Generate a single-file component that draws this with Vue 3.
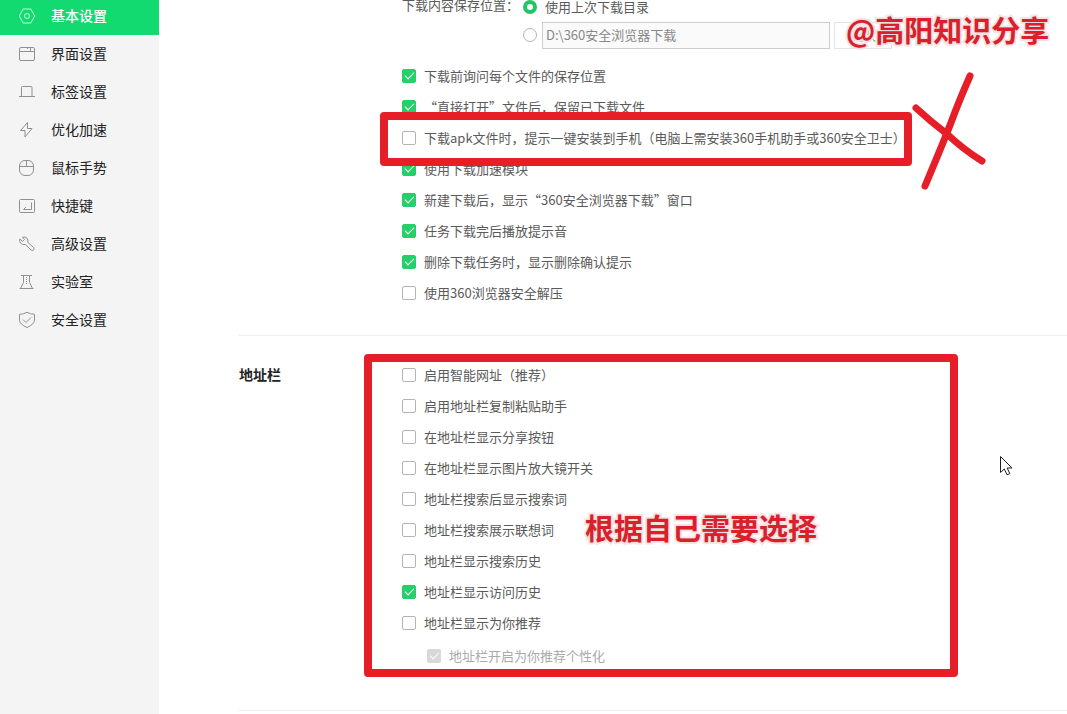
<script setup>
import { ref } from 'vue'

const nav = [
  { id: 'basic', label: '基本设置' },
  { id: 'ui', label: '界面设置' },
  { id: 'tab', label: '标签设置' },
  { id: 'speed', label: '优化加速' },
  { id: 'mouse', label: '鼠标手势' },
  { id: 'keys', label: '快捷键' },
  { id: 'advanced', label: '高级设置' },
  { id: 'lab', label: '实验室' },
  { id: 'safe', label: '安全设置' },
]

const downloads = ref([
  { label: '下载前询问每个文件的保存位置', on: true },
  { label: '“直接打开”文件后，保留已下载文件', on: true },
  { label: '下载apk文件时，提示一键安装到手机（电脑上需安装360手机助手或360安全卫士）', on: false },
  { label: '使用下载加速模块', on: true },
  { label: '新建下载后，显示“360安全浏览器下载”窗口', on: true },
  { label: '任务下载完后播放提示音', on: true },
  { label: '删除下载任务时，显示删除确认提示', on: true },
  { label: '使用360浏览器安全解压', on: false },
])

const address = ref([
  { label: '启用智能网址（推荐）', on: false },
  { label: '启用地址栏复制粘贴助手', on: false },
  { label: '在地址栏显示分享按钮', on: false },
  { label: '在地址栏显示图片放大镜开关', on: false },
  { label: '地址栏搜索后显示搜索词', on: false },
  { label: '地址栏搜索展示联想词', on: false },
  { label: '地址栏显示搜索历史', on: false },
  { label: '地址栏显示访问历史', on: true },
  { label: '地址栏显示为你推荐', on: false },
  { label: '地址栏开启为你推荐个性化', on: true, sub: true },
])

const location = ref('last')
const path = ref('D:\\360安全浏览器下载')
</script>

<template>
  <div class="page" lang="zh-CN">
    <aside class="sidebar">
      <nav class="nav">
        <a v-for="item in nav" :key="item.id" :href="'#' + item.id" class="nav-item" :class="{ active: item.id === 'basic' }">
          <svg class="nav-icon" viewBox="0 0 18 18" aria-hidden="true">
            <template v-if="item.id === 'basic'">
              <path d="M5.200 2h7.600l3.900 7-3.900 7H5.200L1.300 9z" />
              <circle cx="9" cy="9" r="2.500" />
            </template>
            <template v-else-if="item.id === 'ui'">
              <rect x="1.500" y="2.500" width="15" height="13" rx="1.500" />
              <path d="M1.500 6.500h15M9.500 2.500v1.500M12.500 2.500v4" />
            </template>
            <path v-else-if="item.id === 'tab'" d="M1 13.500h16M3.500 13.500v-9q0-1 1-1h8.500q1 0 1 1v9" />
            <path v-else-if="item.id === 'speed'" d="M9.500 1.500L2.500 9.500h4.500v6.500l7-8.500H9.500z" />
            <template v-else-if="item.id === 'mouse'">
              <rect x="1.500" y="1.500" width="14" height="15" rx="5.500" />
              <path d="M1.500 7.500h14M8.500 1.500v6" />
            </template>
            <template v-else-if="item.id === 'keys'">
              <rect x="1.500" y="2.500" width="15" height="13" rx="1" />
              <path d="M13.500 5.500v7h-8M8 10l-2.500 2.500" />
            </template>
            <path v-else-if="item.id === 'advanced'" d="M4.500 2.300Q7 1.200 9 3.200q1.500 1.800.7 4l5.800 5.300q1.200 1.500-.1 2.700-1.300.9-2.500-.3L7.400 9.500Q4.500 10.300 2.600 8.200 1 6.200 1.800 4L4.500 6.300 6.600 4.500z" />
            <template v-else-if="item.id === 'lab'">
              <path d="M3 2.500h11M5.500 2.500v7L2.500 15.500M14.500 15.500l-3-6v-7M1.500 15.500h14" />
              <path class="dots" d="M8.500 4v8" />
            </template>
            <template v-else>
              <path d="M9 1.300Q5.500 3.300 1.500 3.300v6q.3 4 7.500 7.200 7.200-3.200 7.500-7.200v-6Q12.500 3.300 9 1.300z" />
              <path d="M5 8.500l3 3 5-5" />
            </template>
          </svg>
          <span class="nav-label">{{ item.label }}</span>
        </a>
      </nav>
    </aside>

    <main class="main">
      <section class="section first">
        <div class="body">
          <div class="location" role="radiogroup" aria-labelledby="loc-title">
            <span id="loc-title" class="loc-title">下载内容保存位置：</span>
            <div class="loc-options">
              <label class="option last-dir">
                <input v-model="location" type="radio" name="location" value="last" class="radio" />
                <span>使用上次下载目录</span>
              </label>
              <div class="custom">
                <input v-model="location" type="radio" name="location" value="custom" class="radio" aria-label="自定义目录" />
                <input v-model="path" type="text" class="path" aria-label="下载目录" />
                <button type="button" class="change">更改</button>
              </div>
            </div>
          </div>
          <div class="list">
            <div v-for="(item, i) in downloads" :key="item.label" class="row">
              <label class="option">
                <input v-model="item.on" type="checkbox" class="check" />
                <span>{{ item.label }}</span>
              </label>
              <template v-if="i === 2">
                <span class="mark apk-mark"></span>
                <svg class="cross" viewBox="0 0 80 124" aria-hidden="true">
                  <path d="M8 38Q22 51 39 64 56 80 74 91M62 6Q51 31 44 50 38 66 17 116" />
                </svg>
              </template>
            </div>
          </div>
        </div>
      </section>

      <section class="section address">
        <h2 class="title">地址栏</h2>
        <div class="body">
          <div v-for="item in address" :key="item.label" class="row" :class="{ sub: item.sub }">
            <label class="option">
              <input v-model="item.on" type="checkbox" class="check" :disabled="item.sub" />
              <span>{{ item.label }}</span>
            </label>
          </div>
          <span class="mark address-mark"></span>
          <strong class="note choose">根据自己需要选择</strong>
        </div>
      </section>
    </main>

    <strong class="note author">@高阳知识分享</strong>
    <svg class="cursor" viewBox="0 0 14 22" aria-hidden="true">
      <path d="M1.500 1.500v16l3.800-3.500 2.700 5.800 2.800-1.200-2.600-5.600h4.800z" />
    </svg>
  </div>
</template>

<style>
html,
body {
  height: 100%;
  overflow: hidden;
}
body {
  margin: 0;
}
#app {
  height: 100%;
}
</style>

<style scoped>
.page {
  position: relative;
  display: flex;
  height: 100%;
  overflow: hidden;
  background: #fff;
  color: #5a5a5a;
  font: 13px/20px "Noto Sans CJK SC", "Liberation Sans", sans-serif;
}
.sidebar {
  flex: 0 0 159px;
  overflow: hidden;
  background: #f4f4f4;
}
.nav {
  margin-top: -3px;
}
.nav-item {
  display: flex;
  align-items: center;
  gap: 15px;
  height: 38px;
  padding-left: 18px;
  color: #222;
  font-size: 14px;
  text-decoration: none;
}
.nav-label {
  padding-bottom: 2px;
}
.nav-icon {
  width: 18px;
  height: 18px;
  fill: none;
  stroke: #909090;
  stroke-linejoin: round;
}
.dots {
  stroke-dasharray: 1 1;
}
.nav-item.active {
  background: #13da70;
  color: #fff;
  font-weight: 500;
}
.active .nav-icon {
  stroke: #c5ffdd;
}
.main {
  flex: 1;
  min-width: 0;
  padding-left: 80px;
}
.section {
  display: flex;
  border-bottom: 1px solid #eee;
}
.first {
  margin-top: -7px;
  padding-bottom: 27px;
}
.first .body {
  margin-left: 163px;
}
.address {
  padding: 23px 0 37px;
}
.title {
  flex: 0 0 163px;
  margin: 0;
  color: #222;
  font-size: 14px;
  line-height: 31px;
}
.body {
  position: relative;
  flex: 1;
}
.location {
  display: flex;
  gap: 4px;
}
.loc-title {
  width: 117px;
  line-height: 24px;
}
.loc-options {
  display: flex;
  flex-direction: column;
}
.last-dir {
  height: 28px;
}
.custom {
  display: flex;
  align-items: center;
  height: 28px;
}
.radio,
.check {
  flex: none;
  box-sizing: border-box;
  width: 14px;
  height: 14px;
  margin: 0;
  border: 1px solid #b4b4b4;
  background: #fff;
  appearance: none;
}
.radio {
  border-radius: 50%;
}
.radio:checked {
  border: 4px solid #22c565;
}
.check {
  border-radius: 2px;
}
.check:checked {
  display: grid;
  place-items: start center;
  border-color: #25d06a;
  background: #25d06a;
}
.check:checked::after {
  width: 8px;
  height: 4px;
  margin-top: 2px;
  border: solid #fff;
  border-width: 0 0 1px 1px;
  content: "";
  transform: rotate(-45deg);
}
.check:disabled {
  border-color: #d8d8d8;
  background: #d8d8d8;
}
.path {
  box-sizing: border-box;
  width: 288px;
  height: 27px;
  margin: 0 4px 0 5px;
  padding: 0 3px 2px;
  border: 1px solid #ccc;
  background: #fafafa;
  color: #888;
  font: inherit;
}
.change {
  box-sizing: border-box;
  width: 58px;
  height: 27px;
  padding: 0;
  border: 1px solid #e4e4e4;
  background: #fff;
  color: #999;
  font: inherit;
}
.list {
  margin-top: 11px;
}
.row {
  position: relative;
  display: flex;
  align-items: center;
  height: 31px;
}
.option {
  display: flex;
  align-items: center;
  gap: 8px;
  white-space: nowrap;
}
.sub {
  height: 35px;
  padding-left: 25px;
  color: #aaa;
}
.mark {
  position: absolute;
  box-sizing: border-box;
  border: 8px solid #e61e28;
  border-radius: 4px;
  pointer-events: none;
}
.apk-mark {
  z-index: 1;
  top: -10px;
  left: -22px;
  width: 532px;
  height: 54px;
}
.cross {
  position: absolute;
  top: -52px;
  left: 506px;
  width: 80px;
  height: 124px;
  fill: none;
  stroke: #e61e28;
  stroke-linecap: round;
  stroke-width: 7;
}
.address-mark {
  top: -5px;
  left: -38px;
  width: 594px;
  height: 323px;
}
.note {
  position: absolute;
  color: #dc202b;
  font-size: 29px;
  font-weight: 700;
  line-height: 40px;
  white-space: nowrap;
  paint-order: stroke fill;
  -webkit-text-stroke: 4px #fbe6e6;
  text-shadow: 0 0 2px #ccc;
}
.choose {
  top: 148px;
  left: 183px;
}
.author {
  top: 9px;
  left: 846px;
}
.cursor {
  position: absolute;
  top: 455px;
  left: 999px;
  width: 14px;
  height: 22px;
  fill: #fff;
  stroke: #222;
}
</style>
